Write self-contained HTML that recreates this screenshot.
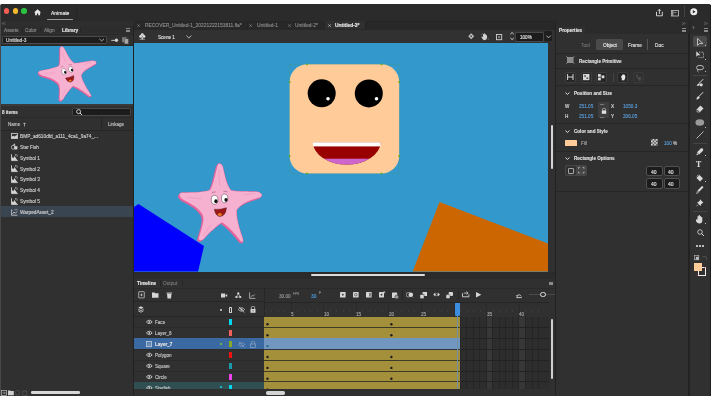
<!DOCTYPE html><html><head><meta charset="utf-8"><style>
html,body{margin:0;padding:0;width:711px;height:400px;overflow:hidden;background:#fff;}
body{position:relative;font-family:"Liberation Sans",sans-serif;}
div,span,svg{position:absolute;box-sizing:border-box;}
.t{white-space:nowrap;will-change:transform;-webkit-text-stroke-width:0.12px;}
</style></head><body>
<div style="left:0px;top:3.5px;width:711px;height:392.8px;background:#303030;border-radius:2.5px 2.5px 0 0;"></div>
<div style="left:0px;top:3.5px;width:711px;height:17.5px;background:#2b2b2b;border-radius:2.5px 2.5px 0 0;"></div>
<div style="left:0px;top:21px;width:134px;height:375.3px;background:#303030;"></div>
<div style="left:132.5px;top:21px;width:1.5px;height:375px;background:#222;"></div>
<div style="left:134px;top:21px;width:421px;height:375.3px;background:#303030;"></div>
<div style="left:556px;top:21px;width:133.5px;height:375.3px;background:#303030;"></div>
<div style="left:554.5px;top:21px;width:1.5px;height:375px;background:#222;"></div>
<div style="left:689.5px;top:21px;width:21.5px;height:375.3px;background:#303030;"></div>
<div style="left:688px;top:21px;width:1.5px;height:375px;background:#222;"></div>
<div style="left:134px;top:21px;width:420.5px;height:8.5px;background:#282828;"></div>
<div style="left:134px;top:29.5px;width:420.5px;height:13.5px;background:#313131;"></div>
<div style="left:134px;top:43px;width:414px;height:228.5px;background:#3399cc;"></div>
<div style="left:134px;top:271.5px;width:420.5px;height:124.5px;background:#303030;"></div>
<div style="left:1px;top:46px;width:131.5px;height:58.3px;background:#3399cc;"></div>
<div style="left:3.8px;top:8.4px;width:5.3px;height:5.3px;border-radius:50%;background:#f65d55"></div>
<div style="left:12.6px;top:8.4px;width:5.3px;height:5.3px;border-radius:50%;background:#f5b92e"></div>
<div style="left:21.4px;top:8.4px;width:5.3px;height:5.3px;border-radius:50%;background:#2cc241"></div>
<svg style="left:33.8px;top:9.3px;" width="10" height="10" viewBox="0 0 10 10"><path d="M3.6,0.2l3.5,3.2h-1v2.9h-1.8v-1.9h-1.4v1.9h-1.8v-2.9h-1z" fill="#e8e8e8"/></svg>
<span class="t" style="left:51px;top:10.00px;font-size:5px;line-height:6.00px;color:#e8e8e8;font-weight:normal;-webkit-text-stroke:0.15px #e8e8e8;">Animate</span>
<div style="left:46.8px;top:18.6px;width:26.4px;height:1.1px;background:#9a9a9a;border-radius:0.5px;"></div>
<div style="left:75.5px;top:4.5px;width:0.6px;height:16px;background:#262626;"></div>
<svg style="left:656.3px;top:9px;" width="10" height="10" viewBox="0 0 10 10"><path d="M0.5,2.8v4h5.8v-4" fill="none" stroke="#e0e0e0" stroke-width="0.9"/><path d="M3.4,5v-4.6M1.9,1.8l1.5,-1.5l1.5,1.5" fill="none" stroke="#e0e0e0" stroke-width="0.9"/></svg>
<svg style="left:670.8px;top:9.6px;" width="10" height="10" viewBox="0 0 10 10"><rect x="0.4" y="0.4" width="7" height="5.6" fill="none" stroke="#c8c8c8" stroke-width="0.8"/><rect x="0.4" y="0.4" width="2" height="5.6" fill="#9a9a9a"/><path d="M2.6,2.6h3" stroke="#c8c8c8" stroke-width="0.6"/></svg>
<div style="left:684.3px;top:6px;width:0.6px;height:10.5px;background:#444;"></div>
<svg style="left:690.2px;top:8.2px;" width="10" height="10" viewBox="0 0 10 10"><circle cx="3.8" cy="3.8" r="3.5" fill="#ececec"/><path d="M2.8,2v3.6l2.7,-1.8z" fill="#2b2b2b"/></svg>
<div style="left:0px;top:20.8px;width:711px;height:0.5px;background:#262626;"></div>
<div style="left:0px;top:21.3px;width:134px;height:5px;background:#2e2e2e;"></div>
<div style="left:324.4px;top:21.4px;width:40.5px;height:8px;background:#303030;"></div>
<svg style="left:137.0px;top:24px;" width="10" height="10" viewBox="0 0 10 10"><path d="M0.3,0.3l2.6,2.6M2.9,0.3l-2.6,2.6" stroke="#8c8c8c" stroke-width="0.6"/></svg>
<span class="t" style="left:144.5px;top:23.36px;font-size:4.9px;line-height:5.88px;color:#8c8c8c;font-weight:normal;">RECOVER_Untitled-1_20221222153811.fla*</span>
<svg style="left:249.1px;top:24px;" width="10" height="10" viewBox="0 0 10 10"><path d="M0.3,0.3l2.6,2.6M2.9,0.3l-2.6,2.6" stroke="#8c8c8c" stroke-width="0.6"/></svg>
<span class="t" style="left:256.9px;top:23.36px;font-size:4.9px;line-height:5.88px;color:#8c8c8c;font-weight:normal;">Untitled-1</span>
<svg style="left:287.5px;top:24px;" width="10" height="10" viewBox="0 0 10 10"><path d="M0.3,0.3l2.6,2.6M2.9,0.3l-2.6,2.6" stroke="#8c8c8c" stroke-width="0.6"/></svg>
<span class="t" style="left:294.6px;top:23.36px;font-size:4.9px;line-height:5.88px;color:#8c8c8c;font-weight:normal;">Untitled-2*</span>
<svg style="left:328.0px;top:24px;" width="10" height="10" viewBox="0 0 10 10"><path d="M0.3,0.3l2.6,2.6M2.9,0.3l-2.6,2.6" stroke="#cfcfcf" stroke-width="0.6"/></svg>
<span class="t" style="left:335px;top:23.36px;font-size:4.9px;line-height:5.88px;color:#ececec;font-weight:bold;">Untitled-3*</span>
<div style="left:247px;top:22px;width:0.6px;height:7px;background:#242424;"></div>
<div style="left:285px;top:22px;width:0.6px;height:7px;background:#242424;"></div>
<div style="left:324.4px;top:22px;width:0.6px;height:7px;background:#242424;"></div>
<div style="left:364.9px;top:22px;width:0.6px;height:7px;background:#242424;"></div>
<svg style="left:139.3px;top:33.3px;" width="10" height="10" viewBox="0 0 10 10"><circle cx="3.3" cy="1.6" r="1.4" fill="#e0e0e0"/><circle cx="1.6" cy="3.4" r="1.4" fill="#e0e0e0"/><circle cx="5" cy="3.4" r="1.4" fill="#e0e0e0"/><path d="M3.3,3.2l1,3h-2z" fill="#e0e0e0"/><path d="M0.5,6.3h5.6" stroke="#e0e0e0" stroke-width="0.5"/></svg>
<span class="t" style="left:158px;top:34.74px;font-size:4.6px;line-height:5.52px;color:#e2e2e2;font-weight:normal;">Scene 1</span>
<svg style="left:185.8px;top:35px;" width="10" height="10" viewBox="0 0 10 10"><path d="M0.4,0.6l2.5,2.4l2.5,-2.4" fill="none" stroke="#d8d8d8" stroke-width="0.8"/></svg>
<svg style="left:468px;top:33.2px;" width="10" height="10" viewBox="0 0 10 10"><path d="M3.2,0.2l3,3l-3,3l-3,-3z" fill="#bdbdbd"/><circle cx="3.2" cy="3.2" r="1" fill="#555"/></svg>
<svg style="left:481px;top:32.8px;" width="10" height="10" viewBox="0 0 10 10"><path d="M2,3v-1.6a0.5,0.5 0 0 1 1,0v-0.6a0.5,0.5 0 0 1 1,0v0.6a0.5,0.5 0 0 1 1,0v1a0.5,0.5 0 0 1 1,0v2.4q0,2.4 -2.4,2.4q-1.6,0 -2.6,-2l-0.6,-1.4q0.5,-0.5 1.6,0.2z" fill="#d0d0d0"/><path d="M0.6,2.4q0.4,-2 2,-2.2M6.4,4.5q1.4,0.8 0.8,2.4" fill="none" stroke="#9a9a9a" stroke-width="0.5"/></svg>
<svg style="left:496.3px;top:33.8px;" width="10" height="10" viewBox="0 0 10 10"><rect x="0.5" y="0.5" width="5.2" height="5.2" fill="none" stroke="#cfcfcf" stroke-width="0.9"/><rect x="2" y="2" width="2.2" height="2.2" fill="#777"/></svg>
<svg style="left:509.8px;top:32.2px;" width="10" height="10" viewBox="0 0 10 10"><path d="M0.4,2.2l1.7,-1.7l1.7,1.7M0.4,6l1.7,1.7l1.7,-1.7" fill="none" stroke="#e0e0e0" stroke-width="0.9"/></svg>
<div style="left:515px;top:31.5px;width:28.5px;height:10px;background:#1c1c1c;border:0.6px solid #484848;border-radius:1px;"></div>
<span class="t" style="left:519.5px;top:34.64px;font-size:4.6px;line-height:5.52px;color:#e6e6e6;font-weight:normal;">100%</span>
<div style="left:544px;top:31.2px;width:7.5px;height:10px;background:#1e1e1e;border-radius:1.5px;"></div>
<svg style="left:545.6px;top:35px;" width="10" height="10" viewBox="0 0 10 10"><path d="M0.3,0.6l2.2,2.2l2.2,-2.2" fill="none" stroke="#d8d8d8" stroke-width="0.8"/></svg>
<div style="left:550.7px;top:125px;width:2.4px;height:44px;background:#d4d4d4;border-radius:1.2px;"></div>
<div style="left:556px;top:21px;width:132.5px;height:5.5px;background:#2b2b2b;"></div>
<div style="left:556px;top:26.5px;width:132.5px;height:7px;background:#2b2b2b;"></div>
<div style="left:556px;top:26.5px;width:29px;height:7px;background:#303030;"></div>
<span class="t" style="left:559px;top:27.78px;font-size:4.7px;line-height:5.64px;color:#e6e6e6;font-weight:bold;">Properties</span>
<div style="left:682.3px;top:28.3px;width:4px;height:0.6px;background:#8a8a8a;"></div>
<div style="left:682.3px;top:29.5px;width:4px;height:0.6px;background:#8a8a8a;"></div>
<div style="left:682.3px;top:30.7px;width:4px;height:0.6px;background:#8a8a8a;"></div>
<svg style="left:682.2px;top:22.4px;" width="10" height="10" viewBox="0 0 10 10"><path d="M0.3,0.3l1.2,1.2l-1.2,1.2M2,0.3l1.2,1.2l-1.2,1.2" fill="none" stroke="#9a9a9a" stroke-width="0.55"/></svg>
<span class="t" style="left:580.5px;top:42.72px;font-size:4.8px;line-height:5.76px;color:#6e6e6e;font-weight:normal;">Tool</span>
<div style="left:596px;top:38.7px;width:27px;height:11.8px;background:#4a4a4a;border-radius:1.5px;"></div>
<span class="t" style="left:602.5px;top:42.72px;font-size:4.8px;line-height:5.76px;color:#f0f0f0;font-weight:normal;">Object</span>
<span class="t" style="left:628px;top:42.72px;font-size:4.8px;line-height:5.76px;color:#e0e0e0;font-weight:normal;">Frame</span>
<div style="left:647.3px;top:39px;width:0.6px;height:11px;background:#555;"></div>
<span class="t" style="left:655px;top:42.72px;font-size:4.8px;line-height:5.76px;color:#e0e0e0;font-weight:normal;">Doc</span>
<div style="left:556px;top:53.3px;width:132.5px;height:0.9px;background:#262626;"></div>
<svg style="left:565.5px;top:56px;" width="10" height="10" viewBox="0 0 10 10"><rect x="1" y="1" width="6.5" height="6" fill="#8a8a8a"/><path d="M0.3,0.3l1.5,1.5M8.2,0.3l-1.5,1.5M0.3,7.7l1.5,-1.5M8.2,7.7l-1.5,-1.5" stroke="#b0b0b0" stroke-width="0.7"/></svg>
<span class="t" style="left:579px;top:58.54px;font-size:4.6px;line-height:5.52px;color:#e0e0e0;font-weight:bold;">Rectangle Primitive</span>
<div style="left:556px;top:67.8px;width:132.5px;height:0.9px;background:#262626;"></div>
<div style="left:565px;top:72px;width:11px;height:10.5px;background:#262626;border:0.6px solid #3e3e3e;border-radius:2px;"></div>
<div style="left:580.5px;top:72px;width:11px;height:10.5px;background:#262626;border:0.6px solid #3e3e3e;border-radius:2px;"></div>
<div style="left:596px;top:72px;width:11px;height:10.5px;background:#262626;border:0.6px solid #3e3e3e;border-radius:2px;"></div>
<div style="left:617px;top:72px;width:11px;height:10.5px;background:#262626;border:0.6px solid #3e3e3e;border-radius:2px;"></div>
<div style="left:633px;top:72px;width:11px;height:10.5px;background:transparent;border:0.6px solid #3a3a3a;border-radius:2px;"></div>
<div style="left:612.8px;top:73px;width:0.6px;height:9px;background:#444;"></div>
<svg style="left:567.3px;top:74.3px;" width="10" height="10" viewBox="0 0 10 10"><path d="M0.6,0v6M6,0v6M0.6,3h5.4" stroke="#d8d8d8" stroke-width="1"/></svg>
<svg style="left:582.5px;top:74.2px;" width="10" height="10" viewBox="0 0 10 10"><rect x="0" y="0" width="6.4" height="6.2" fill="#d8d8d8"/><rect x="1.2" y="1.2" width="1.8" height="1.6" fill="#555"/><rect x="3.4" y="3.4" width="1.8" height="1.6" fill="#555"/></svg>
<svg style="left:598px;top:74.2px;" width="10" height="10" viewBox="0 0 10 10"><rect x="0" y="0" width="2.8" height="2.8" fill="#d8d8d8"/><rect x="3.6" y="1.4" width="2.8" height="2.8" fill="#d8d8d8"/><rect x="0" y="3.6" width="2.8" height="2.8" fill="#d8d8d8"/></svg>
<svg style="left:618.8px;top:74px;" width="10" height="10" viewBox="0 0 10 10"><path d="M0,3h2l1.5,-2.5h2l1,2.5l-1,2.5h-2l-1.5,-2.5" fill="#e8e8e8"/><rect x="2.8" y="4.3" width="2.6" height="2" fill="#e8e8e8"/></svg>
<svg style="left:635px;top:74px;" width="10" height="10" viewBox="0 0 10 10"><path d="M2,0.5v3.5h4M1,1.5h2M4,3v3" fill="none" stroke="#5a5a5a" stroke-width="0.7"/><circle cx="5" cy="5" r="1.3" fill="none" stroke="#5a5a5a" stroke-width="0.6"/></svg>
<div style="left:556px;top:85px;width:132.5px;height:0.9px;background:#262626;"></div>
<svg style="left:564.6px;top:91.8px;" width="10" height="10" viewBox="0 0 10 10"><path d="M0.4,0.5l2,2l2,-2" fill="none" stroke="#e0e0e0" stroke-width="1"/></svg>
<span class="t" style="left:573.5px;top:91.04px;font-size:4.6px;line-height:5.52px;color:#e0e0e0;font-weight:bold;">Position and Size</span>
<span class="t" style="left:565px;top:104.04px;font-size:4.6px;line-height:5.52px;color:#c4c4c4;font-weight:bold;">W</span>
<span class="t" style="left:565.3px;top:114.04px;font-size:4.6px;line-height:5.52px;color:#c4c4c4;font-weight:bold;">H</span>
<span class="t" style="left:579px;top:103.98px;font-size:4.7px;line-height:5.64px;color:#5a9fdc;font-weight:normal;">251.05</span>
<span class="t" style="left:579px;top:113.98px;font-size:4.7px;line-height:5.64px;color:#5a9fdc;font-weight:normal;">251.05</span>
<div style="left:598px;top:102.3px;width:10.5px;height:16px;background:#3e3e3e;border-radius:1px;"></div>
<svg style="left:600.6px;top:107.8px;" width="10" height="10" viewBox="0 0 10 10"><path d="M1.5,2.4v-0.8a1.5,1.5 0 0 1 3,0v0.8" fill="none" stroke="#e0e0e0" stroke-width="0.6"/><rect x="0.8" y="2.4" width="4.4" height="3.4" fill="#e0e0e0"/></svg>
<div style="left:599.7px;top:103.5px;width:4.8px;height:0.5px;background:#777;"></div>
<div style="left:599.7px;top:116.8px;width:4.8px;height:0.5px;background:#777;"></div>
<span class="t" style="left:610.8px;top:104.04px;font-size:4.6px;line-height:5.52px;color:#c4c4c4;font-weight:bold;">X</span>
<span class="t" style="left:611px;top:114.04px;font-size:4.6px;line-height:5.52px;color:#c4c4c4;font-weight:bold;">Y</span>
<span class="t" style="left:623px;top:103.98px;font-size:4.7px;line-height:5.64px;color:#5a9fdc;font-weight:normal;">1050.3</span>
<span class="t" style="left:623px;top:113.98px;font-size:4.7px;line-height:5.64px;color:#5a9fdc;font-weight:normal;">206.05</span>
<div style="left:556px;top:122.5px;width:132.5px;height:0.9px;background:#262626;"></div>
<svg style="left:564.6px;top:129.8px;" width="10" height="10" viewBox="0 0 10 10"><path d="M0.4,0.5l2,2l2,-2" fill="none" stroke="#e0e0e0" stroke-width="1"/></svg>
<span class="t" style="left:573.5px;top:129.04px;font-size:4.6px;line-height:5.52px;color:#e0e0e0;font-weight:bold;">Color and Style</span>
<div style="left:565px;top:139.5px;width:12px;height:6.2px;background:#ffcc99;border-radius:0.5px;"></div>
<span class="t" style="left:581px;top:140.74px;font-size:4.6px;line-height:5.52px;color:#a8a8a8;font-weight:normal;">Fill</span>
<svg style="left:651px;top:139.3px;" width="10" height="10" viewBox="0 0 10 10"><rect x="0" y="0" width="6.5" height="6.5" fill="#ddd"/><path d="M0,0h1.6v1.6h-1.6zM3.2,0h1.6v1.6h-1.6zM1.6,1.6h1.6v1.6h-1.6zM4.8,1.6h1.6v1.6h-1.6zM0,3.2h1.6v1.6h-1.6zM3.2,3.2h1.6v1.6h-1.6zM1.6,4.8h1.6v1.6h-1.6zM4.8,4.8h1.6v1.6h-1.6z" fill="#555"/></svg>
<span class="t" style="left:663.5px;top:140.68px;font-size:4.7px;line-height:5.64px;color:#5a9fdc;font-weight:normal;">100</span>
<span class="t" style="left:672.8px;top:140.68px;font-size:4.7px;line-height:5.64px;color:#d0d0d0;font-weight:normal;">%</span>
<div style="left:556px;top:150.8px;width:132.5px;height:0.9px;background:#262626;"></div>
<svg style="left:564.6px;top:156.8px;" width="10" height="10" viewBox="0 0 10 10"><path d="M0.4,0.5l2,2l2,-2" fill="none" stroke="#e0e0e0" stroke-width="1"/></svg>
<span class="t" style="left:573.5px;top:156.04px;font-size:4.6px;line-height:5.52px;color:#e0e0e0;font-weight:bold;">Rectangle Options</span>
<div style="left:565px;top:165px;width:21.5px;height:11px;background:#464646;border-radius:2px;"></div>
<div style="left:565.6px;top:165.6px;width:10.2px;height:9.8px;background:#303030;border-radius:1.5px;"></div>
<svg style="left:567.6px;top:167.6px;" width="10" height="10" viewBox="0 0 10 10"><rect x="0.4" y="0.4" width="5.2" height="5.2" rx="0.8" fill="none" stroke="#d8d8d8" stroke-width="0.8"/></svg>
<svg style="left:577.8px;top:167.4px;" width="10" height="10" viewBox="0 0 10 10"><path d="M0.4,1.8v-1.4h1.4M4.6,0.4h1.4v1.4M6,4.6v1.4h-1.4M1.8,6h-1.4v-1.4" fill="none" stroke="#bdbdbd" stroke-width="0.8"/></svg>
<div style="left:646px;top:165.5px;width:16.5px;height:10.5px;background:#1c1c1c;border:0.7px solid #505050;border-radius:2px;"></div>
<span class="t" style="left:650.6px;top:168.60px;font-size:5px;line-height:6.00px;color:#e8e8e8;font-weight:normal;">40</span>
<div style="left:663.5px;top:165.5px;width:16.5px;height:10.5px;background:#1c1c1c;border:0.7px solid #505050;border-radius:2px;"></div>
<span class="t" style="left:668.1px;top:168.60px;font-size:5px;line-height:6.00px;color:#e8e8e8;font-weight:normal;">40</span>
<div style="left:646px;top:178px;width:16.5px;height:10.5px;background:#1c1c1c;border:0.7px solid #505050;border-radius:2px;"></div>
<span class="t" style="left:650.6px;top:181.10px;font-size:5px;line-height:6.00px;color:#e8e8e8;font-weight:normal;">40</span>
<div style="left:663.5px;top:178px;width:16.5px;height:10.5px;background:#1c1c1c;border:0.7px solid #505050;border-radius:2px;"></div>
<span class="t" style="left:668.1px;top:181.10px;font-size:5px;line-height:6.00px;color:#e8e8e8;font-weight:normal;">40</span>
<div style="left:556px;top:191.4px;width:132.5px;height:0.9px;background:#262626;"></div>
<div style="left:689.5px;top:21px;width:21.5px;height:5.5px;background:#2b2b2b;"></div>
<svg style="left:704.2px;top:22.4px;" width="10" height="10" viewBox="0 0 10 10"><path d="M0.3,0.3l1.2,1.2l-1.2,1.2M2,0.3l1.2,1.2l-1.2,1.2" fill="none" stroke="#9a9a9a" stroke-width="0.55"/></svg>
<div style="left:689.5px;top:26.5px;width:21.5px;height:7px;background:#2b2b2b;"></div>
<svg style="left:691.5px;top:26px;" width="10" height="10" viewBox="0 0 10 10"><path d="M1.4,0.5v2.6M0.4,1.5l1,-1l1,1" fill="none" stroke="#8a8a8a" stroke-width="0.6"/></svg>
<div style="left:704.2px;top:28.3px;width:4px;height:0.6px;background:#8a8a8a;"></div>
<div style="left:704.2px;top:29.5px;width:4px;height:0.6px;background:#8a8a8a;"></div>
<div style="left:704.2px;top:30.7px;width:4px;height:0.6px;background:#8a8a8a;"></div>
<div style="left:693px;top:36px;width:14px;height:11px;background:#4a4a4a;border-radius:2px;"></div>
<svg style="left:697px;top:38px;" width="10" height="10" viewBox="0 0 10 10"><path d="M0.5,0.5v7l2,-2h3.4z" fill="none" stroke="#d8d8d8" stroke-width="0.8"/></svg>
<div style="left:705.2px;top:45.3px;width:1.1px;height:1.1px;background:#bdbdbd"></div>
<svg style="left:695.6px;top:50.8px;" width="10" height="10" viewBox="0 0 10 10"><path d="M0.3,0.3v5.5l1.5,-1.5h2.6z" fill="#d8d8d8"/><path d="M3,1.2h4.4v5.5h-5" fill="none" stroke="#d8d8d8" stroke-width="0.7" stroke-dasharray="1,0.6"/></svg>
<div style="left:705.2px;top:58.5px;width:1.1px;height:1.1px;background:#bdbdbd"></div>
<svg style="left:696px;top:64.5px;" width="10" height="10" viewBox="0 0 10 10"><ellipse cx="4" cy="2.6" rx="3.6" ry="2.2" fill="none" stroke="#d8d8d8" stroke-width="0.8"/><path d="M1.8,4.5q-1,2 0.8,2.6" fill="none" stroke="#d8d8d8" stroke-width="0.7"/></svg>
<div style="left:705.2px;top:71.3px;width:1.1px;height:1.1px;background:#bdbdbd"></div>
<div style="left:693px;top:75.2px;width:14px;height:0.6px;background:#444;"></div>
<svg style="left:696px;top:79px;" width="10" height="10" viewBox="0 0 10 10"><path d="M7.2,0.2l-4,4" stroke="#d8d8d8" stroke-width="1"/><circle cx="5.2" cy="5.8" r="1.6" fill="#d8d8d8"/><path d="M0.5,6.8q1.5,-3 3.5,-2.4l-0.8,2.4z" fill="#d8d8d8"/></svg>
<svg style="left:696px;top:92px;" width="10" height="10" viewBox="0 0 10 10"><path d="M7.2,0.2l-4.2,4.2" stroke="#d8d8d8" stroke-width="1"/><path d="M0.5,7.5q0,-3 2.4,-3.2l0.8,0.8q-0.2,2.4 -3.2,2.4z" fill="#d8d8d8"/></svg>
<svg style="left:696px;top:105px;" width="10" height="10" viewBox="0 0 10 10"><path d="M4.5,0.5l3,3l-3.5,3.5l-3,-3z" fill="#d8d8d8"/><path d="M1,4l3,3h-3z" fill="none" stroke="#d8d8d8" stroke-width="0.6"/></svg>
<svg style="left:695.2px;top:119px;" width="10" height="10" viewBox="0 0 10 10"><ellipse cx="4.8" cy="3.5" rx="4.3" ry="3.2" fill="#9a9a9a"/></svg>
<div style="left:705.2px;top:126.5px;width:1.1px;height:1.1px;background:#bdbdbd"></div>
<svg style="left:696px;top:131px;" width="10" height="10" viewBox="0 0 10 10"><path d="M0.5,7.5l7,-7" stroke="#d8d8d8" stroke-width="0.8"/></svg>
<div style="left:693px;top:143.3px;width:14px;height:0.6px;background:#444;"></div>
<svg style="left:696px;top:147.5px;" width="10" height="10" viewBox="0 0 10 10"><path d="M7,0.5l-2,-0.2l-4,4l2.2,2.2l4,-4z" fill="#d8d8d8"/><path d="M1,5l-0.6,2.2l2.2,-0.6" fill="#d8d8d8"/></svg>
<div style="left:705.2px;top:154.5px;width:1.1px;height:1.1px;background:#bdbdbd"></div>
<span class="t" style="left:696.3px;top:160.12px;font-size:7.8px;line-height:9.36px;color:#d8d8d8;font-weight:bold;font-family:\"Liberation Serif\",serif;">T</span>
<svg style="left:696px;top:173.5px;" width="10" height="10" viewBox="0 0 10 10"><path d="M3.5,1l3.5,3.5l-3,3l-3.5,-3.5z" fill="#d8d8d8"/><path d="M0.8,2.5l2,-2" stroke="#d8d8d8" stroke-width="0.7"/></svg>
<div style="left:705.2px;top:181px;width:1.1px;height:1.1px;background:#bdbdbd"></div>
<svg style="left:696px;top:185.5px;" width="10" height="10" viewBox="0 0 10 10"><path d="M7,0.6l-1,-0.5l-4.5,4.5l1.4,1.4l4.5,-4.5z" fill="#d8d8d8"/><path d="M1.6,5l-1.1,2.5l2.5,-1.1" fill="none" stroke="#d8d8d8" stroke-width="0.6"/></svg>
<svg style="left:696px;top:199px;" width="10" height="10" viewBox="0 0 10 10"><path d="M4,0.2l3.5,3.5l-1,0.4l-1.6,1.6l-0.4,1.2l-3.4,-3.4l1.2,-0.4l1.6,-1.6z" fill="#d8d8d8"/><path d="M2.2,5.5l-1.8,1.8" stroke="#d8d8d8" stroke-width="0.7"/></svg>
<div style="left:693px;top:211px;width:14px;height:0.6px;background:#444;"></div>
<svg style="left:696px;top:214.5px;" width="10" height="10" viewBox="0 0 10 10"><path d="M1.5,4.5v-3a0.6,0.6 0 0 1 1.2,0v-1a0.6,0.6 0 0 1 1.2,0v1a0.6,0.6 0 0 1 1.2,0v1a0.6,0.6 0 0 1 1.2,0v3q0,3 -3,3q-2,0 -3.5,-2.5l-0.6,-1.5q0.6,-0.6 1.3,0z" fill="#d8d8d8"/></svg>
<div style="left:705.2px;top:222.5px;width:1.1px;height:1.1px;background:#bdbdbd"></div>
<svg style="left:696.5px;top:228.5px;" width="10" height="10" viewBox="0 0 10 10"><circle cx="3" cy="3" r="2.3" fill="none" stroke="#d8d8d8" stroke-width="0.8"/><path d="M4.6,4.6l2.4,2.4" stroke="#d8d8d8" stroke-width="1"/></svg>
<div style="left:696.4px;top:245.2px;width:1.5px;height:1.5px;border-radius:50%;background:#d8d8d8"></div>
<div style="left:699.3px;top:245.2px;width:1.5px;height:1.5px;border-radius:50%;background:#d8d8d8"></div>
<div style="left:702.1999999999999px;top:245.2px;width:1.5px;height:1.5px;border-radius:50%;background:#d8d8d8"></div>
<svg style="left:694px;top:254.5px;" width="10" height="10" viewBox="0 0 10 10"><rect x="0.4" y="0.4" width="4.4" height="4.4" fill="none" stroke="#bdbdbd" stroke-width="0.6"/><rect x="1.8" y="1.8" width="3" height="3" fill="#bdbdbd"/></svg>
<svg style="left:701.8px;top:254.5px;" width="10" height="10" viewBox="0 0 10 10"><path d="M0.5,1.5h2.5q1.5,0 1.5,1.5v2" fill="none" stroke="#666" stroke-width="0.6"/></svg>
<div style="left:697.5px;top:267px;width:8.6px;height:9px;background:transparent;border:1px solid #f0f0f0;"></div>
<div style="left:693.5px;top:262.5px;width:8.5px;height:8.5px;background:#ffcc99;"></div>
<svg style="left:696.3px;top:266px;" width="11" height="11" viewBox="0 0 11 11"><path d="M9.4,1l-1,1M2,8.6l-1,1" stroke="#e03a3a" stroke-width="0.9"/></svg>
<svg style="left:697px;top:282px;" width="10" height="10" viewBox="0 0 10 10"><path d="M2,0.5l2,2l-2,2" fill="none" stroke="#3a3a3a" stroke-width="0.6"/></svg>
<svg style="left:2.2px;top:22.4px;" width="10" height="10" viewBox="0 0 10 10"><path d="M1.5,0.3l-1.2,1.2l1.2,1.2M3.2,0.3l-1.2,1.2l1.2,1.2" fill="none" stroke="#9a9a9a" stroke-width="0.55"/></svg>
<div style="left:0px;top:26.3px;width:133px;height:7.2px;background:#2d2d2d;"></div>
<div style="left:59px;top:26.3px;width:21px;height:7.2px;background:#303030;"></div>
<div style="left:21.5px;top:27px;width:0.6px;height:6px;background:#262626;"></div>
<div style="left:40px;top:27px;width:0.6px;height:6px;background:#262626;"></div>
<div style="left:58.5px;top:27px;width:0.6px;height:6px;background:#262626;"></div>
<div style="left:80px;top:27px;width:0.6px;height:6px;background:#262626;"></div>
<span class="t" style="left:3.5px;top:27.82px;font-size:4.8px;line-height:5.76px;color:#8e8e8e;font-weight:normal;">Assets</span>
<span class="t" style="left:25px;top:27.82px;font-size:4.8px;line-height:5.76px;color:#8e8e8e;font-weight:normal;">Color</span>
<span class="t" style="left:43.5px;top:27.82px;font-size:4.8px;line-height:5.76px;color:#8e8e8e;font-weight:normal;">Align</span>
<span class="t" style="left:61.6px;top:27.82px;font-size:4.8px;line-height:5.76px;color:#e8e8e8;font-weight:bold;">Library</span>
<div style="left:126px;top:28.3px;width:4px;height:0.6px;background:#8a8a8a;"></div>
<div style="left:126px;top:29.5px;width:4px;height:0.6px;background:#8a8a8a;"></div>
<div style="left:126px;top:30.7px;width:4px;height:0.6px;background:#8a8a8a;"></div>
<div style="left:0px;top:33.5px;width:133px;height:0.6px;background:#282828;"></div>
<div style="left:1.5px;top:36.2px;width:105.7px;height:8.2px;background:#1e1e1e;border:0.6px solid #4a4a4a;border-radius:1.5px;"></div>
<span class="t" style="left:5.8px;top:38.22px;font-size:4.8px;line-height:5.76px;color:#e0e0e0;font-weight:normal;">Untitled-3</span>
<svg style="left:98.8px;top:38.3px;" width="10" height="10" viewBox="0 0 10 10"><path d="M0.4,0.8l2.3,2.2l2.3,-2.2" fill="none" stroke="#d0d0d0" stroke-width="0.8"/></svg>
<svg style="left:110.8px;top:38.2px;" width="10" height="10" viewBox="0 0 10 10"><circle cx="5.4" cy="2.3" r="1.7" fill="#cfcfcf"/><rect x="0.3" y="1.9" width="4" height="0.9" fill="#cfcfcf"/></svg>
<svg style="left:121.8px;top:37.3px;" width="10" height="10" viewBox="0 0 10 10"><rect x="0.3" y="0.3" width="4.3" height="5" fill="#8a8a8a"/><rect x="2.2" y="1.8" width="4.4" height="5.2" fill="#a8a8a8" stroke="#323232" stroke-width="0.5"/></svg>
<div style="left:0px;top:45.3px;width:133px;height:0.8px;background:#282828;"></div>
<div style="left:1px;top:104.3px;width:131.5px;height:2.2px;background:#3a3a3a;"></div>
<span class="t" style="left:2px;top:110.44px;font-size:4.6px;line-height:5.52px;color:#e0e0e0;font-weight:bold;">8 items</span>
<div style="left:72.4px;top:107.6px;width:59px;height:8.1px;background:#1c1c1c;border:0.6px solid #484848;border-radius:1.5px;"></div>
<svg style="left:75.6px;top:108.8px;" width="10" height="10" viewBox="0 0 10 10"><circle cx="2.6" cy="2.6" r="2" fill="none" stroke="#e0e0e0" stroke-width="0.9"/><path d="M4,4l2,2" stroke="#e0e0e0" stroke-width="1"/></svg>
<div style="left:0px;top:117px;width:133px;height:0.6px;background:#2a2a2a;"></div>
<span class="t" style="left:7.5px;top:122.04px;font-size:4.6px;line-height:5.52px;color:#c4c4c4;font-weight:normal;">Name</span>
<svg style="left:23.4px;top:121.5px;" width="10" height="10" viewBox="0 0 10 10"><path d="M1.5,4.5v-3.5M0.3,2.1l1.2,-1.3l1.2,1.3" fill="none" stroke="#c4c4c4" stroke-width="0.7"/></svg>
<div style="left:101.3px;top:117.5px;width:0.6px;height:12.8px;background:#262626;"></div>
<span class="t" style="left:107.6px;top:122.04px;font-size:4.6px;line-height:5.52px;color:#c4c4c4;font-weight:normal;">Linkage</span>
<div style="left:0px;top:130.1px;width:133px;height:0.6px;background:#262626;"></div>
<svg style="left:11px;top:133.1px;" width="10" height="10" viewBox="0 0 10 10"><rect x="0.4" y="0.4" width="6" height="5.2" fill="none" stroke="#d4d4d4" stroke-width="0.8"/><path d="M0.8,5.2v-1.8l1.6,-0.6l1.2,0.9l1.7,-1.6l0.9,0.7v2.4z" fill="#d4d4d4"/></svg>
<span class="t" style="left:20px;top:134.05px;font-size:4.75px;line-height:5.70px;color:#d4d4d4;font-weight:normal;">BMP_ad610dfd_a111_4ca1_9a74_...</span>
<svg style="left:10.8px;top:143.35px;" width="10" height="10" viewBox="0 0 10 10"><path d="M3.3,0.2l1.4,2.2h-2.8z" fill="#c8c8c8"/><circle cx="2.2" cy="4.3" r="1.9" fill="none" stroke="#d4d4d4" stroke-width="0.7"/><rect x="3.2" y="3.2" width="3.2" height="3.2" fill="#d4d4d4"/></svg>
<span class="t" style="left:20px;top:144.90px;font-size:4.75px;line-height:5.70px;color:#d4d4d4;font-weight:normal;">Star Fish</span>
<svg style="left:11px;top:154.2px;" width="10" height="10" viewBox="0 0 10 10"><path d="M0.5,0.3v6.3h6.3" fill="none" stroke="#d4d4d4" stroke-width="0.9"/><path d="M1,6.3v-3.2l1.2,1.2l1.4,-2.2l1,1.6l1.8,2.6z" fill="#d4d4d4"/><circle cx="4.6" cy="0.9" r="0.55" fill="#d4d4d4"/><circle cx="6.1" cy="1.9" r="0.55" fill="#d4d4d4"/><circle cx="5.8" cy="0.3" r="0.4" fill="#d4d4d4"/></svg>
<span class="t" style="left:20px;top:155.75px;font-size:4.75px;line-height:5.70px;color:#d4d4d4;font-weight:normal;">Symbol 1</span>
<svg style="left:11px;top:165.04999999999998px;" width="10" height="10" viewBox="0 0 10 10"><path d="M0.5,0.3v6.3h6.3" fill="none" stroke="#d4d4d4" stroke-width="0.9"/><path d="M1,6.3v-3.2l1.2,1.2l1.4,-2.2l1,1.6l1.8,2.6z" fill="#d4d4d4"/><circle cx="4.6" cy="0.9" r="0.55" fill="#d4d4d4"/><circle cx="6.1" cy="1.9" r="0.55" fill="#d4d4d4"/><circle cx="5.8" cy="0.3" r="0.4" fill="#d4d4d4"/></svg>
<span class="t" style="left:20px;top:166.60px;font-size:4.75px;line-height:5.70px;color:#d4d4d4;font-weight:normal;">Symbol 2</span>
<svg style="left:11px;top:175.9px;" width="10" height="10" viewBox="0 0 10 10"><path d="M0.5,0.3v6.3h6.3" fill="none" stroke="#d4d4d4" stroke-width="0.9"/><path d="M1,6.3v-3.2l1.2,1.2l1.4,-2.2l1,1.6l1.8,2.6z" fill="#d4d4d4"/><circle cx="4.6" cy="0.9" r="0.55" fill="#d4d4d4"/><circle cx="6.1" cy="1.9" r="0.55" fill="#d4d4d4"/><circle cx="5.8" cy="0.3" r="0.4" fill="#d4d4d4"/></svg>
<span class="t" style="left:20px;top:177.45px;font-size:4.75px;line-height:5.70px;color:#d4d4d4;font-weight:normal;">Symbol 3</span>
<svg style="left:11px;top:186.75px;" width="10" height="10" viewBox="0 0 10 10"><path d="M0.5,0.3v6.3h6.3" fill="none" stroke="#d4d4d4" stroke-width="0.9"/><path d="M1,6.3v-3.2l1.2,1.2l1.4,-2.2l1,1.6l1.8,2.6z" fill="#d4d4d4"/><circle cx="4.6" cy="0.9" r="0.55" fill="#d4d4d4"/><circle cx="6.1" cy="1.9" r="0.55" fill="#d4d4d4"/><circle cx="5.8" cy="0.3" r="0.4" fill="#d4d4d4"/></svg>
<span class="t" style="left:20px;top:188.30px;font-size:4.75px;line-height:5.70px;color:#d4d4d4;font-weight:normal;">Symbol 4</span>
<svg style="left:11px;top:197.6px;" width="10" height="10" viewBox="0 0 10 10"><path d="M0.5,0.3v6.3h6.3" fill="none" stroke="#d4d4d4" stroke-width="0.9"/><path d="M1,6.3v-3.2l1.2,1.2l1.4,-2.2l1,1.6l1.8,2.6z" fill="#d4d4d4"/><circle cx="4.6" cy="0.9" r="0.55" fill="#d4d4d4"/><circle cx="6.1" cy="1.9" r="0.55" fill="#d4d4d4"/><circle cx="5.8" cy="0.3" r="0.4" fill="#d4d4d4"/></svg>
<span class="t" style="left:20px;top:199.15px;font-size:4.75px;line-height:5.70px;color:#d4d4d4;font-weight:normal;">Symbol 5</span>
<div style="left:1px;top:206.4px;width:131.5px;height:10.9px;background:#3a4552;"></div>
<svg style="left:11px;top:208.65px;" width="10" height="10" viewBox="0 0 10 10"><path d="M0.4,6.2v-5.5l1,1M0.4,6.2h6M1.4,5l1.6,-2l1.2,1.2l2,-1.6" fill="none" stroke="#d0d0d0" stroke-width="0.8"/><path d="M3.5,0.8h3" stroke="#d0d0d0" stroke-width="0.6"/></svg>
<span class="t" style="left:20px;top:210.00px;font-size:4.75px;line-height:5.70px;color:#d4d4d4;font-weight:normal;">WarpedAsset_2</span>
<svg style="left:1.2px;top:389.8px;" width="10" height="10" viewBox="0 0 10 10"><rect x="0.4" y="0.4" width="5" height="5" fill="none" stroke="#bdbdbd" stroke-width="0.7"/><path d="M1.5,2.9h2.8M3.2,1.8l1.1,1.1l-1.1,1.1" fill="none" stroke="#bdbdbd" stroke-width="0.6"/></svg>
<svg style="left:7.8px;top:390px;" width="10" height="10" viewBox="0 0 10 10"><path d="M0,0.4h2.2l0.6,0.7h3v4.2h-5.8z" fill="#cfcfcf"/></svg>
<svg style="left:15px;top:390px;" width="10" height="10" viewBox="0 0 10 10"><circle cx="2.6" cy="2.7" r="2.3" fill="none" stroke="#555" stroke-width="0.7"/></svg>
<svg style="left:22.2px;top:389.8px;" width="10" height="10" viewBox="0 0 10 10"><rect x="0.8" y="1" width="4" height="4.6" fill="none" stroke="#555" stroke-width="0.7"/></svg>
<div style="left:30.8px;top:391.3px;width:49px;height:2.5px;background:#d8d8d8;border-radius:1.2px;"></div>
<div style="left:134px;top:271.5px;width:420.5px;height:7.5px;background:#2b2b2b;"></div>
<div style="left:311px;top:273.7px;width:114px;height:2.8px;background:#dcdcdc;border-radius:1.4px;"></div>
<div style="left:134px;top:279px;width:420.5px;height:117.3px;background:#303030;"></div>
<div style="left:134px;top:279px;width:25.5px;height:8.5px;background:#313131;"></div>
<div style="left:159.5px;top:280px;width:0.6px;height:7px;background:#262626;"></div>
<div style="left:181.5px;top:280px;width:0.6px;height:7px;background:#262626;"></div>
<div style="left:134px;top:287.5px;width:420.5px;height:0.7px;background:#2a2a2a;"></div>
<span class="t" style="left:137px;top:281.25px;font-size:4.75px;line-height:5.70px;color:#e8e8e8;font-weight:bold;">Timeline</span>
<span class="t" style="left:162.5px;top:281.25px;font-size:4.75px;line-height:5.70px;color:#7a7a7a;font-weight:normal;">Output</span>
<div style="left:549px;top:281.6px;width:4px;height:0.6px;background:#8a8a8a;"></div>
<div style="left:549px;top:282.8px;width:4px;height:0.6px;background:#8a8a8a;"></div>
<div style="left:549px;top:284.0px;width:4px;height:0.6px;background:#8a8a8a;"></div>
<div style="left:134px;top:301.4px;width:130px;height:0.8px;background:#262626;"></div>
<div style="left:134px;top:316px;width:130px;height:0.6px;background:#262626;"></div>
<div style="left:264px;top:288px;width:0.8px;height:108px;background:#262626;"></div>
<div style="left:264.5px;top:302px;width:284px;height:87px;background:#2d2d2d;"></div>
<div style="left:264.5px;top:302px;width:284px;height:14.5px;background:#303030;"></div>
<div style="left:264.2px;top:316.5px;width:0.6px;height:72.5px;background:#252525;"></div>
<div style="left:270.71999999999997px;top:316.5px;width:0.6px;height:72.5px;background:#252525;"></div>
<div style="left:277.24px;top:316.5px;width:0.6px;height:72.5px;background:#252525;"></div>
<div style="left:283.76px;top:316.5px;width:0.6px;height:72.5px;background:#252525;"></div>
<div style="left:290.28px;top:316.5px;width:0.6px;height:72.5px;background:#252525;"></div>
<div style="left:296.8px;top:316.5px;width:0.6px;height:72.5px;background:#252525;"></div>
<div style="left:303.32px;top:316.5px;width:0.6px;height:72.5px;background:#252525;"></div>
<div style="left:309.84px;top:316.5px;width:0.6px;height:72.5px;background:#252525;"></div>
<div style="left:316.35999999999996px;top:316.5px;width:0.6px;height:72.5px;background:#252525;"></div>
<div style="left:322.88px;top:316.5px;width:0.6px;height:72.5px;background:#252525;"></div>
<div style="left:329.4px;top:316.5px;width:0.6px;height:72.5px;background:#252525;"></div>
<div style="left:335.92px;top:316.5px;width:0.6px;height:72.5px;background:#252525;"></div>
<div style="left:342.44px;top:316.5px;width:0.6px;height:72.5px;background:#252525;"></div>
<div style="left:348.96px;top:316.5px;width:0.6px;height:72.5px;background:#252525;"></div>
<div style="left:355.47999999999996px;top:316.5px;width:0.6px;height:72.5px;background:#252525;"></div>
<div style="left:362.0px;top:316.5px;width:0.6px;height:72.5px;background:#252525;"></div>
<div style="left:368.52px;top:316.5px;width:0.6px;height:72.5px;background:#252525;"></div>
<div style="left:375.03999999999996px;top:316.5px;width:0.6px;height:72.5px;background:#252525;"></div>
<div style="left:381.56px;top:316.5px;width:0.6px;height:72.5px;background:#252525;"></div>
<div style="left:388.08px;top:316.5px;width:0.6px;height:72.5px;background:#252525;"></div>
<div style="left:394.59999999999997px;top:316.5px;width:0.6px;height:72.5px;background:#252525;"></div>
<div style="left:401.11999999999995px;top:316.5px;width:0.6px;height:72.5px;background:#252525;"></div>
<div style="left:407.64px;top:316.5px;width:0.6px;height:72.5px;background:#252525;"></div>
<div style="left:414.15999999999997px;top:316.5px;width:0.6px;height:72.5px;background:#252525;"></div>
<div style="left:420.68px;top:316.5px;width:0.6px;height:72.5px;background:#252525;"></div>
<div style="left:427.2px;top:316.5px;width:0.6px;height:72.5px;background:#252525;"></div>
<div style="left:433.71999999999997px;top:316.5px;width:0.6px;height:72.5px;background:#252525;"></div>
<div style="left:440.23999999999995px;top:316.5px;width:0.6px;height:72.5px;background:#252525;"></div>
<div style="left:446.76px;top:316.5px;width:0.6px;height:72.5px;background:#252525;"></div>
<div style="left:453.28px;top:316.5px;width:0.6px;height:72.5px;background:#252525;"></div>
<div style="left:459.8px;top:316.5px;width:0.6px;height:72.5px;background:#252525;"></div>
<div style="left:466.32px;top:316.5px;width:0.6px;height:72.5px;background:#252525;"></div>
<div style="left:472.84px;top:316.5px;width:0.6px;height:72.5px;background:#252525;"></div>
<div style="left:479.35999999999996px;top:316.5px;width:0.6px;height:72.5px;background:#252525;"></div>
<div style="left:486.17999999999995px;top:316.5px;width:6.52px;height:72.5px;background:#373737;"></div>
<div style="left:485.87999999999994px;top:316.5px;width:0.6px;height:72.5px;background:#252525;"></div>
<div style="left:492.4px;top:316.5px;width:0.6px;height:72.5px;background:#252525;"></div>
<div style="left:498.91999999999996px;top:316.5px;width:0.6px;height:72.5px;background:#252525;"></div>
<div style="left:505.44px;top:316.5px;width:0.6px;height:72.5px;background:#252525;"></div>
<div style="left:511.96px;top:316.5px;width:0.6px;height:72.5px;background:#252525;"></div>
<div style="left:518.78px;top:316.5px;width:6.52px;height:72.5px;background:#373737;"></div>
<div style="left:518.48px;top:316.5px;width:0.6px;height:72.5px;background:#252525;"></div>
<div style="left:525.0px;top:316.5px;width:0.6px;height:72.5px;background:#252525;"></div>
<div style="left:531.52px;top:316.5px;width:0.6px;height:72.5px;background:#252525;"></div>
<div style="left:538.04px;top:316.5px;width:0.6px;height:72.5px;background:#252525;"></div>
<div style="left:264.5px;top:302px;width:284px;height:0.8px;background:#262626;"></div>
<div style="left:264.5px;top:309.5px;width:0.5px;height:2px;background:#3c3c3c;"></div>
<div style="left:271.02px;top:309.5px;width:0.5px;height:2px;background:#3c3c3c;"></div>
<div style="left:277.54px;top:309.5px;width:0.5px;height:2px;background:#3c3c3c;"></div>
<div style="left:284.06px;top:309.5px;width:0.5px;height:2px;background:#3c3c3c;"></div>
<div style="left:290.58px;top:302.5px;width:0.5px;height:14px;background:#2a2a2a;"></div>
<div style="left:297.1px;top:309.5px;width:0.5px;height:2px;background:#3c3c3c;"></div>
<div style="left:303.62px;top:309.5px;width:0.5px;height:2px;background:#3c3c3c;"></div>
<div style="left:310.14px;top:309.5px;width:0.5px;height:2px;background:#3c3c3c;"></div>
<div style="left:316.65999999999997px;top:309.5px;width:0.5px;height:2px;background:#3c3c3c;"></div>
<div style="left:323.18px;top:302.5px;width:0.5px;height:14px;background:#2a2a2a;"></div>
<div style="left:329.7px;top:309.5px;width:0.5px;height:2px;background:#3c3c3c;"></div>
<div style="left:336.22px;top:309.5px;width:0.5px;height:2px;background:#3c3c3c;"></div>
<div style="left:342.74px;top:309.5px;width:0.5px;height:2px;background:#3c3c3c;"></div>
<div style="left:349.26px;top:309.5px;width:0.5px;height:2px;background:#3c3c3c;"></div>
<div style="left:355.78px;top:302.5px;width:0.5px;height:14px;background:#2a2a2a;"></div>
<div style="left:362.3px;top:309.5px;width:0.5px;height:2px;background:#3c3c3c;"></div>
<div style="left:368.82px;top:309.5px;width:0.5px;height:2px;background:#3c3c3c;"></div>
<div style="left:375.34px;top:309.5px;width:0.5px;height:2px;background:#3c3c3c;"></div>
<div style="left:381.86px;top:309.5px;width:0.5px;height:2px;background:#3c3c3c;"></div>
<div style="left:388.38px;top:302.5px;width:0.5px;height:14px;background:#2a2a2a;"></div>
<div style="left:394.9px;top:309.5px;width:0.5px;height:2px;background:#3c3c3c;"></div>
<div style="left:401.41999999999996px;top:309.5px;width:0.5px;height:2px;background:#3c3c3c;"></div>
<div style="left:407.94px;top:309.5px;width:0.5px;height:2px;background:#3c3c3c;"></div>
<div style="left:414.46px;top:309.5px;width:0.5px;height:2px;background:#3c3c3c;"></div>
<div style="left:420.98px;top:302.5px;width:0.5px;height:14px;background:#2a2a2a;"></div>
<div style="left:427.5px;top:309.5px;width:0.5px;height:2px;background:#3c3c3c;"></div>
<div style="left:434.02px;top:309.5px;width:0.5px;height:2px;background:#3c3c3c;"></div>
<div style="left:440.53999999999996px;top:309.5px;width:0.5px;height:2px;background:#3c3c3c;"></div>
<div style="left:447.06px;top:309.5px;width:0.5px;height:2px;background:#3c3c3c;"></div>
<div style="left:453.58px;top:302.5px;width:0.5px;height:14px;background:#2a2a2a;"></div>
<div style="left:460.1px;top:309.5px;width:0.5px;height:2px;background:#3c3c3c;"></div>
<div style="left:466.62px;top:309.5px;width:0.5px;height:2px;background:#3c3c3c;"></div>
<div style="left:473.14px;top:309.5px;width:0.5px;height:2px;background:#3c3c3c;"></div>
<div style="left:479.65999999999997px;top:309.5px;width:0.5px;height:2px;background:#3c3c3c;"></div>
<div style="left:486.17999999999995px;top:302.5px;width:0.5px;height:14px;background:#2a2a2a;"></div>
<div style="left:492.7px;top:309.5px;width:0.5px;height:2px;background:#3c3c3c;"></div>
<div style="left:499.21999999999997px;top:309.5px;width:0.5px;height:2px;background:#3c3c3c;"></div>
<div style="left:505.74px;top:309.5px;width:0.5px;height:2px;background:#3c3c3c;"></div>
<div style="left:512.26px;top:309.5px;width:0.5px;height:2px;background:#3c3c3c;"></div>
<div style="left:518.78px;top:302.5px;width:0.5px;height:14px;background:#2a2a2a;"></div>
<div style="left:525.3px;top:309.5px;width:0.5px;height:2px;background:#3c3c3c;"></div>
<div style="left:531.8199999999999px;top:309.5px;width:0.5px;height:2px;background:#3c3c3c;"></div>
<div style="left:538.3399999999999px;top:309.5px;width:0.5px;height:2px;background:#3c3c3c;"></div>
<span class="t" style="left:290.97999999999996px;top:311.64px;font-size:4.6px;line-height:5.52px;color:#a8a8a8;font-weight:normal;">5</span>
<span class="t" style="left:323.58px;top:311.64px;font-size:4.6px;line-height:5.52px;color:#a8a8a8;font-weight:normal;">10</span>
<span class="t" style="left:356.17999999999995px;top:311.64px;font-size:4.6px;line-height:5.52px;color:#a8a8a8;font-weight:normal;">15</span>
<span class="t" style="left:388.78px;top:311.64px;font-size:4.6px;line-height:5.52px;color:#a8a8a8;font-weight:normal;">20</span>
<span class="t" style="left:421.38px;top:311.64px;font-size:4.6px;line-height:5.52px;color:#a8a8a8;font-weight:normal;">25</span>
<span class="t" style="left:486.5799999999999px;top:311.64px;font-size:4.6px;line-height:5.52px;color:#a8a8a8;font-weight:normal;">35</span>
<span class="t" style="left:519.18px;top:311.64px;font-size:4.6px;line-height:5.52px;color:#a8a8a8;font-weight:normal;">40</span>
<div style="left:264.2px;top:316.5px;width:196px;height:72.5px;background:#a48f3b;"></div>
<div style="left:264.2px;top:326.9px;width:284px;height:1px;background:#3e3a28;"></div>
<div style="left:460.5px;top:326.9px;width:88px;height:0.8px;background:#222;"></div>
<div style="left:134px;top:327.0px;width:130px;height:0.6px;background:#2a2a2a;"></div>
<div style="left:229.3px;top:319.3px;width:2.4px;height:6.2px;background:#00d8f0;"></div>
<svg style="left:145.8px;top:319.1px;" width="10" height="10" viewBox="0 0 10 10"><path d="M0.4,2.9q2.9,-3.4 5.8,0q-2.9,3.4 -5.8,0z" fill="none" stroke="#d0d0d0" stroke-width="0.9"/><circle cx="3.3" cy="2.9" r="0.9" fill="#d0d0d0"/></svg>
<span class="t" style="left:155px;top:320.14px;font-size:4.6px;line-height:5.52px;color:#c8c8c8;font-weight:normal;">Face</span>
<div style="left:264.2px;top:337.79999999999995px;width:284px;height:1px;background:#2e3440;"></div>
<div style="left:460.5px;top:337.79999999999995px;width:88px;height:0.8px;background:#222;"></div>
<div style="left:134px;top:337.9px;width:130px;height:0.6px;background:#2a2a2a;"></div>
<div style="left:229.3px;top:330.2px;width:2.4px;height:6.2px;background:#f06060;"></div>
<svg style="left:145.8px;top:330.0px;" width="10" height="10" viewBox="0 0 10 10"><path d="M0.4,2.9q2.9,-3.4 5.8,0q-2.9,3.4 -5.8,0z" fill="none" stroke="#d0d0d0" stroke-width="0.9"/><circle cx="3.3" cy="2.9" r="0.9" fill="#d0d0d0"/></svg>
<span class="t" style="left:155px;top:331.04px;font-size:4.6px;line-height:5.52px;color:#c8c8c8;font-weight:normal;">Layer_8</span>
<div style="left:134px;top:338.3px;width:130px;height:10.9px;background:#3b69a1;"></div>
<div style="left:264.2px;top:338.1px;width:196px;height:10.6px;background:#7196c0;"></div>
<div style="left:264.2px;top:348.7px;width:284px;height:1px;background:#2e3440;"></div>
<div style="left:460.5px;top:348.7px;width:88px;height:0.8px;background:#222;"></div>
<div style="left:134px;top:348.8px;width:130px;height:0.6px;background:#2a2a2a;"></div>
<div style="left:229.3px;top:341.1px;width:2.4px;height:6.2px;background:#88aa22;"></div>
<svg style="left:145.8px;top:340.90000000000003px;" width="10" height="10" viewBox="0 0 10 10"><rect x="0.5" y="0.5" width="5" height="5.2" fill="none" stroke="#c8d4e4" stroke-width="0.8"/><path d="M1.5,2h3M1.5,3.2h3M1.5,4.4h3" stroke="#c8d4e4" stroke-width="0.5"/></svg>
<div style="left:220px;top:342.8px;width:2px;height:2px;border-radius:50%;background:#7acc33"></div>
<svg style="left:238.3px;top:340.7px;" width="10" height="10" viewBox="0 0 10 10"><path d="M0.3,3.5q3.2,-3.6 6.4,0q-3.2,3.6 -6.4,0z" fill="none" stroke="#9ab0cc" stroke-width="0.6"/><path d="M0.8,0.8l5.6,5.8" stroke="#9ab0cc" stroke-width="0.6"/></svg>
<svg style="left:250.3px;top:340.8px;" width="10" height="10" viewBox="0 0 10 10"><path d="M1.3,3v-1.2a1.7,1.7 0 0 1 3.4,0v1.2" fill="none" stroke="#9ab0cc" stroke-width="0.6"/><rect x="0.6" y="3" width="4.8" height="3.6" fill="none" stroke="#9ab0cc" stroke-width="0.6"/></svg>
<span class="t" style="left:155px;top:341.94px;font-size:4.6px;line-height:5.52px;color:#e6e6e6;font-weight:bold;">Layer_7</span>
<div style="left:264.2px;top:359.59999999999997px;width:284px;height:1px;background:#3e3a28;"></div>
<div style="left:460.5px;top:359.59999999999997px;width:88px;height:0.8px;background:#222;"></div>
<div style="left:134px;top:359.7px;width:130px;height:0.6px;background:#2a2a2a;"></div>
<div style="left:229.3px;top:352.0px;width:2.4px;height:6.2px;background:#ee1111;"></div>
<svg style="left:145.8px;top:351.8px;" width="10" height="10" viewBox="0 0 10 10"><path d="M0.4,2.9q2.9,-3.4 5.8,0q-2.9,3.4 -5.8,0z" fill="none" stroke="#d0d0d0" stroke-width="0.9"/><circle cx="3.3" cy="2.9" r="0.9" fill="#d0d0d0"/></svg>
<span class="t" style="left:155px;top:352.84px;font-size:4.6px;line-height:5.52px;color:#c8c8c8;font-weight:normal;">Polygon</span>
<div style="left:264.2px;top:370.5px;width:284px;height:1px;background:#3e3a28;"></div>
<div style="left:460.5px;top:370.5px;width:88px;height:0.8px;background:#222;"></div>
<div style="left:134px;top:370.6px;width:130px;height:0.6px;background:#2a2a2a;"></div>
<div style="left:229.3px;top:362.90000000000003px;width:2.4px;height:6.2px;background:#1a9aaa;"></div>
<svg style="left:145.8px;top:362.70000000000005px;" width="10" height="10" viewBox="0 0 10 10"><path d="M0.4,2.9q2.9,-3.4 5.8,0q-2.9,3.4 -5.8,0z" fill="none" stroke="#d0d0d0" stroke-width="0.9"/><circle cx="3.3" cy="2.9" r="0.9" fill="#d0d0d0"/></svg>
<span class="t" style="left:155px;top:363.74px;font-size:4.6px;line-height:5.52px;color:#c8c8c8;font-weight:normal;">Square</span>
<div style="left:264.2px;top:381.4px;width:284px;height:1px;background:#3e3a28;"></div>
<div style="left:460.5px;top:381.4px;width:88px;height:0.8px;background:#222;"></div>
<div style="left:134px;top:381.5px;width:130px;height:0.6px;background:#2a2a2a;"></div>
<div style="left:229.3px;top:373.8px;width:2.4px;height:6.2px;background:#ee44ee;"></div>
<svg style="left:145.8px;top:373.6px;" width="10" height="10" viewBox="0 0 10 10"><path d="M0.4,2.9q2.9,-3.4 5.8,0q-2.9,3.4 -5.8,0z" fill="none" stroke="#d0d0d0" stroke-width="0.9"/><circle cx="3.3" cy="2.9" r="0.9" fill="#d0d0d0"/></svg>
<span class="t" style="left:155px;top:374.64px;font-size:4.6px;line-height:5.52px;color:#c8c8c8;font-weight:normal;">Circle</span>
<div style="left:134px;top:381.9px;width:130px;height:7.100000000000023px;background:#2f4f52;"></div>
<div style="left:229.3px;top:384.7px;width:2.4px;height:6.2px;background:#00d8f0;"></div>
<svg style="left:145.8px;top:384.5px;" width="10" height="10" viewBox="0 0 10 10"><path d="M0.4,2.9q2.9,-3.4 5.8,0q-2.9,3.4 -5.8,0z" fill="none" stroke="#d0d0d0" stroke-width="0.9"/><circle cx="3.3" cy="2.9" r="0.9" fill="#d0d0d0"/></svg>
<div style="left:220px;top:386.4px;width:2px;height:2px;border-radius:50%;background:#22ccee"></div>
<span class="t" style="left:155px;top:385.54px;font-size:4.6px;line-height:5.52px;color:#c8c8c8;font-weight:normal;">Starfish</span>
<svg style="left:0px;top:0px;" width="711" height="400" viewBox="0 0 711 400"><circle cx="267.50" cy="324.30" r="1.2" fill="#1e1e1e"/><circle cx="391.38" cy="324.30" r="1.2" fill="#1e1e1e"/><circle cx="267.50" cy="335.20" r="1.2" fill="#1e1e1e"/><circle cx="391.38" cy="335.20" r="1.2" fill="#1e1e1e"/><circle cx="267.50" cy="346.10" r="1.2" fill="#2a6a88"/><circle cx="267.50" cy="357.00" r="1.2" fill="#1e1e1e"/><circle cx="391.38" cy="357.00" r="1.2" fill="#1e1e1e"/><circle cx="267.50" cy="367.90" r="1.2" fill="#1e1e1e"/><circle cx="391.38" cy="367.90" r="1.2" fill="#1e1e1e"/><circle cx="267.50" cy="378.80" r="1.2" fill="#1e1e1e"/><circle cx="391.38" cy="378.80" r="1.2" fill="#1e1e1e"/><circle cx="267.50" cy="389.70" r="1.2" fill="#1e1e1e"/></svg>
<div style="left:134px;top:389px;width:420.5px;height:7.3px;background:#303030;"></div>
<div style="left:266px;top:391px;width:18.5px;height:3.5px;background:#d4d4d4;border-radius:1.7px;"></div>
<div style="left:454.5px;top:302.8px;width:5.5px;height:13.3px;background:#3a8ddf;border-radius:0 0 1px 1px;"></div>
<div style="left:456.6px;top:316px;width:0.8px;height:73px;background:#6f8fa8;"></div>
<div style="left:550.7px;top:319px;width:2.4px;height:60px;background:#d0d0d0;border-radius:1.2px;"></div>
<svg style="left:137.5px;top:291.2px;" width="10" height="10" viewBox="0 0 10 10"><rect x="0.7" y="0.7" width="5.6" height="6.2" rx="0.4" fill="none" stroke="#d6d6d6" stroke-width="0.7"/><path d="M3.5,2.6v2.6 M2.2,3.9h2.6" stroke="#d6d6d6" stroke-width="0.7"/></svg>
<svg style="left:152px;top:292px;" width="10" height="10" viewBox="0 0 10 10"><path d="M0,0.5h2.5l0.8,0.8h3.2v4.5h-6.5z" fill="#d6d6d6"/></svg>
<svg style="left:166px;top:291.5px;" width="10" height="10" viewBox="0 0 10 10"><rect x="0.5" y="0.6" width="5.5" height="0.9" fill="#d6d6d6"/><path d="M1,1.8h4.5l-0.5,4.6h-3.5z" fill="#d6d6d6"/></svg>
<svg style="left:220.8px;top:292.5px;" width="10" height="10" viewBox="0 0 10 10"><rect x="0" y="0.5" width="4.2" height="4" fill="#d6d6d6"/><path d="M4.2,2.5l2,-1.6v3.2z" fill="#d6d6d6"/></svg>
<svg style="left:234.5px;top:291.5px;" width="10" height="10" viewBox="0 0 10 10"><circle cx="3.3" cy="1.4" r="1.1" fill="#d6d6d6"/><circle cx="1.3" cy="5" r="1.1" fill="#d6d6d6"/><circle cx="5.3" cy="5" r="1.1" fill="#d6d6d6"/><path d="M3.3,1.5L1.3,5M3.3,1.5L5.3,5M1.3,5h4" stroke="#d6d6d6" stroke-width="0.6"/></svg>
<svg style="left:248.5px;top:291.5px;" width="10" height="10" viewBox="0 0 10 10"><path d="M0.6,0.4v6h5.8" fill="none" stroke="#d6d6d6" stroke-width="0.7"/><path d="M1.6,5.2l1.6,-1.8l1,0.8l1.6,-1.8" fill="none" stroke="#d6d6d6" stroke-width="0.6"/></svg>
<span class="t" style="left:279px;top:294.04px;font-size:4.6px;line-height:5.52px;color:#9c9c9c;font-weight:normal;">30.00</span>
<span class="t" style="left:293px;top:292.68px;font-size:3.2px;line-height:3.84px;color:#8a8a8a;font-weight:normal;">FPS</span>
<span class="t" style="left:310.8px;top:294.12px;font-size:4.8px;line-height:5.76px;color:#4aa0e8;font-weight:normal;">30</span>
<span class="t" style="left:318.6px;top:291.36px;font-size:3.4px;line-height:4.08px;color:#9a9a9a;font-weight:normal;">F</span>
<svg style="left:339.9px;top:292.2px;" width="10" height="10" viewBox="0 0 10 10"><rect x="0" y="0" width="5.6" height="5.4" rx="0.4" fill="#d6d6d6"/><circle cx="2.8" cy="2.7" r="0.9" fill="#333"/></svg>
<svg style="left:352.7px;top:292.2px;" width="10" height="10" viewBox="0 0 10 10"><rect x="0" y="0" width="5.6" height="5.4" rx="0.4" fill="#d6d6d6"/><circle cx="2.8" cy="2.7" r="1.3" fill="none" stroke="#333" stroke-width="0.6"/></svg>
<svg style="left:365.7px;top:292.2px;" width="10" height="10" viewBox="0 0 10 10"><rect x="0" y="0" width="5.6" height="5.4" rx="0.4" fill="#d6d6d6"/><rect x="3" y="0.8" width="1.8" height="3.8" fill="#777"/></svg>
<svg style="left:378.8px;top:291.2px;" width="10" height="10" viewBox="0 0 10 10"><rect x="0" y="1" width="5" height="5.4" rx="0.4" fill="#d6d6d6"/><circle cx="2.5" cy="3.7" r="0.9" fill="#333"/><path d="M5.2,0v2.4M4,1.2h2.4" stroke="#d6d6d6" stroke-width="0.6"/></svg>
<svg style="left:391.7px;top:291.6px;" width="10" height="10" viewBox="0 0 10 10"><rect x="0" y="0.6" width="5.2" height="5.4" rx="0.4" fill="#d6d6d6"/><circle cx="4.8" cy="5" r="2" fill="#9a9a9a" stroke="#333" stroke-width="0.5"/></svg>
<div style="left:402.3px;top:290px;width:0.6px;height:10px;background:#262626;"></div>
<svg style="left:406.3px;top:292.2px;" width="10" height="10" viewBox="0 0 10 10"><circle cx="2.4" cy="2.7" r="2.3" fill="none" stroke="#bbb" stroke-width="0.7"/><circle cx="4.8" cy="2.7" r="2.3" fill="#d6d6d6"/><circle cx="6.9" cy="5.4" r="0.35" fill="#d6d6d6"/></svg>
<svg style="left:420px;top:291.8px;" width="10" height="10" viewBox="0 0 10 10"><rect x="2.6" y="0" width="4.4" height="4" fill="#d6d6d6"/><rect x="0" y="2.6" width="4" height="4" fill="#d6d6d6" stroke="#333" stroke-width="0.5"/></svg>
<svg style="left:433px;top:292.4px;" width="10" height="10" viewBox="0 0 10 10"><path d="M0.3,2.6l2,-2v1.2h2.6v-1.2l2,2l-2,2v-1.2h-2.6v1.2z" fill="#d6d6d6"/><rect x="2.6" y="2" width="1.9" height="1.2" fill="#333"/></svg>
<svg style="left:446px;top:291.8px;" width="10" height="10" viewBox="0 0 10 10"><rect x="2.6" y="0" width="4.4" height="4" rx="1" fill="#d6d6d6"/><rect x="0" y="2.6" width="4" height="4" rx="1" fill="#d6d6d6" stroke="#333" stroke-width="0.5"/></svg>
<div style="left:457.8px;top:290px;width:0.6px;height:10px;background:#262626;"></div>
<svg style="left:462px;top:291.2px;" width="10" height="10" viewBox="0 0 10 10"><path d="M0.5,2.2v3.6h6.4v-2.4" fill="none" stroke="#d6d6d6" stroke-width="0.9"/><path d="M1.8,2.1h4.2M4.4,0.5l1.7,1.6l-1.7,1.6" fill="none" stroke="#d6d6d6" stroke-width="0.8"/></svg>
<svg style="left:475.5px;top:292.2px;" width="10" height="10" viewBox="0 0 10 10"><path d="M0,0l5.3,2.75l-5.3,2.75z" fill="#d6d6d6"/></svg>
<svg style="left:515.5px;top:292.7px;" width="10" height="10" viewBox="0 0 10 10"><path d="M0.3,4.6h5.4" stroke="#d6d6d6" stroke-width="0.9"/><path d="M0.8,3.3q2,-3.2 4.6,0" fill="none" stroke="#d6d6d6" stroke-width="0.8"/><path d="M0.2,1.8l1,1.8l1.2,-1" fill="none" stroke="#d6d6d6" stroke-width="0.6"/></svg>
<div style="left:529px;top:294.4px;width:26px;height:0.6px;background:#4a4a4a;"></div>
<div style="left:540.3px;top:292px;width:5.4px;height:5.4px;border-radius:50%;border:0.9px solid #e0e0e0;background:#323232"></div>
<svg style="left:138.3px;top:305.8px;" width="10" height="10" viewBox="0 0 10 10"><path d="M2.9,0.3l2.7,1.4l-2.7,1.4l-2.7,-1.4z" fill="#d6d6d6"/><path d="M0.2,3.2l2.7,1.4l2.7,-1.4M0.2,4.8l2.7,1.4l2.7,-1.4" fill="none" stroke="#d6d6d6" stroke-width="0.8"/></svg>
<div style="left:219.9px;top:308.5px;width:2.2px;height:2.2px;border-radius:50%;background:#d6d6d6"></div>
<div style="left:228.6px;top:306.8px;width:3.8px;height:5.9px;background:transparent;border:0.8px solid #d6d6d6;border-radius:0.8px;"></div>
<svg style="left:238.3px;top:305.6px;" width="10" height="10" viewBox="0 0 10 10"><path d="M0.3,3.5q3.2,-3.6 6.4,0q-3.2,3.6 -6.4,0z" fill="none" stroke="#d6d6d6" stroke-width="0.7"/><circle cx="3.5" cy="3.5" r="1" fill="#d6d6d6"/><path d="M0.8,0.8l5.6,5.8" stroke="#d6d6d6" stroke-width="0.7"/></svg>
<svg style="left:250.3px;top:305.5px;" width="10" height="10" viewBox="0 0 10 10"><path d="M1.3,3v-1.2a1.7,1.7 0 0 1 3.4,0v1.2" fill="none" stroke="#d6d6d6" stroke-width="0.7"/><rect x="0.5" y="3" width="5" height="3.8" fill="#d6d6d6"/><rect x="2.6" y="4.2" width="0.8" height="1.2" fill="#333"/></svg>
<svg style="left:0px;top:0px;" width="711" height="400" viewBox="0 0 711 400"><defs><clipPath id="starclip"><path d="M216.2,166.8 Q219.2,160.3 222.6,166.2 C224.5,175 226.5,185 231,190.5 C238,192 249,191.5 256.5,191.7 Q265,193.5 259.5,198.3 C251,201 241,203.5 236.5,210 C236,218 239,228 242,236.5 Q245,245 239.5,242.5 C235,237 229,229 220.8,223.5 C214,228 207,235 202.5,240.2 Q196.5,243.5 197.8,238.5 C200,230 204,221 201,215.5 C197,209 190,205 182,201 Q175,196.5 181,192.8 C188,192.5 201,193 209.5,190.5 C212,185 214,176 216.2,166.8 Z"/></clipPath><clipPath id="stc"><rect x="134" y="43" width="414" height="228.5"/></clipPath><clipPath id="pvc"><rect x="1" y="46" width="131.5" height="58.3"/></clipPath></defs><g clip-path="url(#stc)"><polygon points="134,207 138.5,204 204,246 198,272 134,272" fill="#0000ff"/><polygon points="439.5,202 549,244 549,272 412.5,272" fill="#cc6600"/><rect x="289.6" y="64.3" width="109.6" height="109.2" rx="17.5" ry="17.5" fill="#ffcc99"/><rect x="289.6" y="64.3" width="109.6" height="109.2" fill="none" stroke="#5a9a2a" stroke-width="0.4" opacity="0.35"/><circle cx="307" cy="64.4" r="0.9" fill="#6aa814"/><circle cx="289.7" cy="82" r="0.9" fill="#6aa814"/><circle cx="381.5" cy="64.4" r="0.9" fill="#6aa814"/><circle cx="399.1" cy="82" r="0.9" fill="#6aa814"/><circle cx="289.7" cy="156" r="0.9" fill="#6aa814"/><circle cx="307" cy="173.4" r="0.9" fill="#6aa814"/><circle cx="381.5" cy="173.4" r="0.9" fill="#6aa814"/><circle cx="399.1" cy="156" r="0.9" fill="#6aa814"/><circle cx="321.7" cy="93.3" r="14" fill="#000"/><circle cx="368.8" cy="93.4" r="14" fill="#000"/><circle cx="328" cy="98.8" r="1.8" fill="#fff"/><circle cx="376.5" cy="98.8" r="1.8" fill="#fff"/><clipPath id="mc"><path d="M313,142.3 A33.75,22.3 0 0 0 380.5,142.3 Z"/></clipPath><g clip-path="url(#mc)"><rect x="313" y="142" width="68" height="24" fill="#990000"/><rect x="313" y="158.7" width="68" height="8" fill="#cc66cc"/></g><rect x="313" y="142.2" width="67.5" height="4.2" fill="#fff"/><g transform="translate(220,207) rotate(0) scale(1.0) translate(-220,-207)"><path d="M216.2,166.8 Q219.2,160.3 222.6,166.2 C224.5,175 226.5,185 231,190.5 C238,192 249,191.5 256.5,191.7 Q265,193.5 259.5,198.3 C251,201 241,203.5 236.5,210 C236,218 239,228 242,236.5 Q245,245 239.5,242.5 C235,237 229,229 220.8,223.5 C214,228 207,235 202.5,240.2 Q196.5,243.5 197.8,238.5 C200,230 204,221 201,215.5 C197,209 190,205 182,201 Q175,196.5 181,192.8 C188,192.5 201,193 209.5,190.5 C212,185 214,176 216.2,166.8 Z" fill="#e8629a" stroke="#e8629a" stroke-width="0.8" stroke-linejoin="round"/><g clip-path="url(#starclip)"><path d="M216.2,166.8 Q219.2,160.3 222.6,166.2 C224.5,175 226.5,185 231,190.5 C238,192 249,191.5 256.5,191.7 Q265,193.5 259.5,198.3 C251,201 241,203.5 236.5,210 C236,218 239,228 242,236.5 Q245,245 239.5,242.5 C235,237 229,229 220.8,223.5 C214,228 207,235 202.5,240.2 Q196.5,243.5 197.8,238.5 C200,230 204,221 201,215.5 C197,209 190,205 182,201 Q175,196.5 181,192.8 C188,192.5 201,193 209.5,190.5 C212,185 214,176 216.2,166.8 Z" transform="translate(1.3,-1.3)" fill="#f6b0d0"/></g><path d="M219.5,170 Q218,178 220,186" fill="none" stroke="#d9719c" stroke-width="0.4" opacity="0.7"/><path d="M187,197 Q195,198 201,199" fill="none" stroke="#d9719c" stroke-width="0.4" opacity="0.7"/><path d="M244,195 Q250,194 255,193.5" fill="none" stroke="#d9719c" stroke-width="0.4" opacity="0.7"/><path d="M226,226 Q232,232 236,238" fill="none" stroke="#d9719c" stroke-width="0.4" opacity="0.7"/><path d="M211,225 Q206,231 203,236" fill="none" stroke="#d9719c" stroke-width="0.4" opacity="0.7"/><path d="M211.8,193 Q213.5,191.6 215.5,192" fill="none" stroke="#8a3a5a" stroke-width="0.5"/><path d="M223.5,191.5 Q225.5,190.8 227.5,192" fill="none" stroke="#8a3a5a" stroke-width="0.5"/><ellipse cx="214.6" cy="199.8" rx="3.3" ry="4.5" fill="#fff" stroke="#3a2a30" stroke-width="0.45"/><ellipse cx="224.6" cy="198.4" rx="3.2" ry="4.3" fill="#fff" stroke="#3a2a30" stroke-width="0.45"/><ellipse cx="215.9" cy="201.2" rx="1.6" ry="1.9" fill="#111"/><ellipse cx="226" cy="199.8" rx="1.6" ry="1.9" fill="#111"/><path d="M214.4,209.3 Q220.5,209.9 226.4,207.8 Q225.8,216.6 219.2,216.5 Q215.2,215.2 214.4,209.3 Z" fill="#9c1818" stroke="#4a1010" stroke-width="0.45"/><ellipse cx="219.8" cy="214.4" rx="2.1" ry="1.5" fill="#e27a22"/></g></g><g clip-path="url(#pvc)"><g transform="matrix(0.6999,-0.1297,0.1712,0.6693,-120.36,-34.27)"><path d="M216.2,166.8 Q219.2,160.3 222.6,166.2 C224.5,175 226.5,185 231,190.5 C238,192 249,191.5 256.5,191.7 Q265,193.5 259.5,198.3 C251,201 241,203.5 236.5,210 C236,218 239,228 242,236.5 Q245,245 239.5,242.5 C235,237 229,229 220.8,223.5 C214,228 207,235 202.5,240.2 Q196.5,243.5 197.8,238.5 C200,230 204,221 201,215.5 C197,209 190,205 182,201 Q175,196.5 181,192.8 C188,192.5 201,193 209.5,190.5 C212,185 214,176 216.2,166.8 Z" fill="#e8629a" stroke="#e8629a" stroke-width="0.8" stroke-linejoin="round"/><g clip-path="url(#starclip)"><path d="M216.2,166.8 Q219.2,160.3 222.6,166.2 C224.5,175 226.5,185 231,190.5 C238,192 249,191.5 256.5,191.7 Q265,193.5 259.5,198.3 C251,201 241,203.5 236.5,210 C236,218 239,228 242,236.5 Q245,245 239.5,242.5 C235,237 229,229 220.8,223.5 C214,228 207,235 202.5,240.2 Q196.5,243.5 197.8,238.5 C200,230 204,221 201,215.5 C197,209 190,205 182,201 Q175,196.5 181,192.8 C188,192.5 201,193 209.5,190.5 C212,185 214,176 216.2,166.8 Z" transform="translate(1.3,-1.3)" fill="#f6b0d0"/></g><path d="M219.5,170 Q218,178 220,186" fill="none" stroke="#d9719c" stroke-width="0.4" opacity="0.7"/><path d="M187,197 Q195,198 201,199" fill="none" stroke="#d9719c" stroke-width="0.4" opacity="0.7"/><path d="M244,195 Q250,194 255,193.5" fill="none" stroke="#d9719c" stroke-width="0.4" opacity="0.7"/><path d="M226,226 Q232,232 236,238" fill="none" stroke="#d9719c" stroke-width="0.4" opacity="0.7"/><path d="M211,225 Q206,231 203,236" fill="none" stroke="#d9719c" stroke-width="0.4" opacity="0.7"/><path d="M211.8,193 Q213.5,191.6 215.5,192" fill="none" stroke="#8a3a5a" stroke-width="0.5"/><path d="M223.5,191.5 Q225.5,190.8 227.5,192" fill="none" stroke="#8a3a5a" stroke-width="0.5"/><ellipse cx="214.6" cy="199.8" rx="3.3" ry="4.5" fill="#fff" stroke="#3a2a30" stroke-width="0.45"/><ellipse cx="224.6" cy="198.4" rx="3.2" ry="4.3" fill="#fff" stroke="#3a2a30" stroke-width="0.45"/><ellipse cx="215.9" cy="201.2" rx="1.6" ry="1.9" fill="#111"/><ellipse cx="226" cy="199.8" rx="1.6" ry="1.9" fill="#111"/><path d="M214.4,209.3 Q220.5,209.9 226.4,207.8 Q225.8,216.6 219.2,216.5 Q215.2,215.2 214.4,209.3 Z" fill="#9c1818" stroke="#4a1010" stroke-width="0.45"/><ellipse cx="219.8" cy="214.4" rx="2.1" ry="1.5" fill="#e27a22"/></g></g></svg>
<div style="left:0px;top:5px;width:0.8px;height:391.3px;background:#484848;"></div>
<div style="left:710.3px;top:5px;width:0.7px;height:391.3px;background:#1e1e1e;"></div>
</body></html>
